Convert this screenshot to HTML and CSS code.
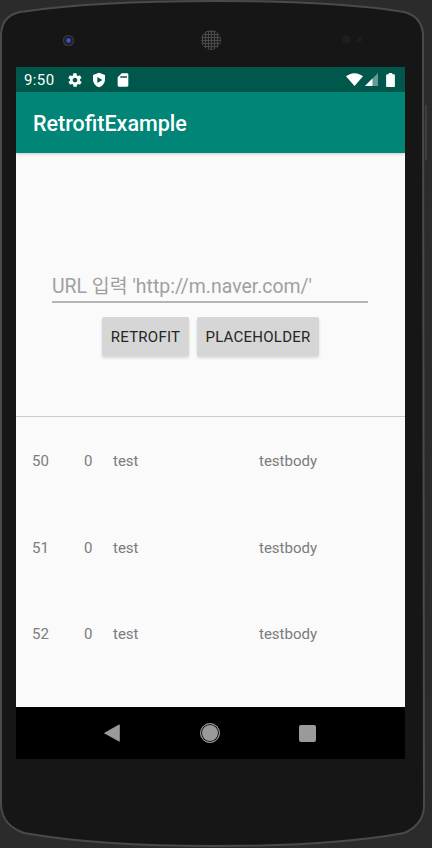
FILE: index.html
```html
<!DOCTYPE html>
<html lang="ko">
<head>
  <meta charset="UTF-8">
  <title>RetrofitExample</title>
  <link rel="stylesheet" href="styles.css">
</head>
<body>
  <div class="phone">
    <svg class="phone-body" viewBox="0 0 432 848">
      <path d="M1 34C2 21 8 15 20 12C80 3 150 1 216 1C282 1 350 3 404 12C416 15 422 22 423 34L424 805C424 820 416 828 404 833C350 843 282 846 216 846C150 846 80 843 24 833C10 828 2 820 1 805Z"/>
    </svg>
    <span class="power-key"></span>
    <div class="top-bezel">
      <span class="camera"></span>
      <span class="speaker"></span>
      <span class="sensors"><i></i><i></i></span>
    </div>

    <div class="screen">
      <div class="status-bar">
        <span class="clock">9:50</span>
        <svg class="ic ic-gear" viewBox="0 0 24 24"><path d="M19.4 13c.1-.3.1-.7.1-1s0-.7-.1-1l2.100-1.600c.2-.2.2-.4.1-.6l-2-3.500c-.1-.2-.4-.3-.6-.2l-2.500 1c-.5-.4-1.100-.7-1.700-1l-.4-2.600c0-.3-.2-.5-.5-.5h-4c-.3 0-.5.2-.5.400l-.4 2.700c-.6.2-1.200.6-1.700 1l-2.500-1c-.2-.1-.5 0-.6.2l-2 3.500c-.1.2-.1.5.1.6L4.600 11c0 .3-.1.700-.1 1s0 .7.1 1l-2.100 1.600c-.2.2-.2.4-.1.600l2 3.500c.1.2.4.3.6.2l2.500-1c.5.4 1.100.7 1.700 1l.4 2.600c0 .3.2.5.5.5h4c.3 0 .5-.2.5-.4l.4-2.700c.6-.2 1.200-.6 1.700-1l2.500 1c.2.1.5 0 .6-.2l2-3.500c.1-.2.1-.5-.1-.6L19.400 13zM12 15.500c-1.900 0-3.500-1.600-3.500-3.500s1.600-3.500 3.500-3.500 3.500 1.600 3.500 3.500-1.600 3.500-3.500 3.500z"/></svg>
        <svg class="ic ic-shield" viewBox="0 0 24 24"><path fill-rule="evenodd" d="M12 1 3 4.500v6.500c0 5.600 3.800 10.700 9 12 5.200-1.300 9-6.400 9-12V4.500L12 1zM9.500 7.500v9l7.500-4.500-7.500-4.500z"/></svg>
        <svg class="ic ic-card" viewBox="0 0 24 24"><path fill-rule="evenodd" d="M10 2 4 8v12c0 1.100.9 2 2 2h12c1.100 0 2-.9 2-2V4c0-1.100-.9-2-2-2h-8zM8 6.500h10v2H8z"/></svg>
        <span class="status-gap"></span>
        <svg class="ic-wifi" viewBox="0 0 24 18"><path d="M12 18 0 4.500C3 1.800 7.300 0 12 0s9 1.800 12 4.500L12 18z"/></svg>
        <svg class="ic-signal" viewBox="0 0 14 14"><path opacity=".4" d="M14 0v14H0z"/><path d="M8 6v8H0z"/></svg>
        <svg class="ic-battery" viewBox="0 0 10 16"><path d="M3 0h4v1.500h2c.6 0 1 .4 1 1V15c0 .6-.4 1-1 1H1c-.6 0-1-.4-1-1V2.500c0-.6.4-1 1-1h2z"/></svg>
      </div>
      <div class="toolbar">RetrofitExample</div>

      <div class="content">
        <div class="form-area">
          <div class="url-input">URL 입력 'http://m.naver.com/'</div>
          <div class="btn-row">
            <button class="btn btn-retrofit" type="button">RETROFIT</button>
            <button class="btn btn-placeholder" type="button">PLACEHOLDER</button>
          </div>
        </div>
        <div class="list">
          <div class="row"><span class="c-id">50</span><span class="c-user">0</span><span class="c-title">test</span><span>testbody</span></div>
          <div class="row"><span class="c-id">51</span><span class="c-user">0</span><span class="c-title">test</span><span>testbody</span></div>
          <div class="row"><span class="c-id">52</span><span class="c-user">0</span><span class="c-title">test</span><span>testbody</span></div>
        </div>
      </div>

      <div class="nav-bar">
        <svg class="nav-back" viewBox="0 0 16 18"><path d="M15 .5c.4-.2.800 0 .8.500v16c0 .5-.4.700-.8.500L.5 9.500c-.3-.2-.3-.600 0-.8L15 .5z"/></svg>
        <span class="nav-home"></span>
        <span class="nav-recent"></span>
      </div>
    </div>
  </div>
</body>
</html>
```
FILE: styles.css
```css
html, body { margin: 0; height: 100%; }
body { background: #2b2b2b; overflow: hidden; font-family: Roboto, "Noto Sans CJK KR", sans-serif; }

.phone { position: relative; height: 848px; padding-top: 67px; box-sizing: border-box; }
.phone-body { position: absolute; left: 0; top: 0; width: 432px; height: 848px; }
.phone-body path { fill: #161616; stroke: #4a4a4a; stroke-width: 2; }
.power-key { position: absolute; left: 425px; top: 105px; width: 2px; height: 55px; background: #3d3d3d; }

.top-bezel { position: absolute; left: 0; top: 0; width: 432px; height: 67px; }
.camera {
  position: absolute; left: 63px; top: 35px;
  width: 11px; height: 11px; border-radius: 50%;
  background: radial-gradient(circle, #4a52c0 0 18%, #15162c 42%, #333 62%, #6a6a6a 85%, #161616 100%);
}
.speaker {
  position: absolute; left: 201px; top: 30px;
  width: 20px; height: 20px; border-radius: 50%;
  background: radial-gradient(circle, #4a4a4a 1px, #1c1c1c 1.2px) 0 0 / 3px 3px;
}
.sensors { position: absolute; left: 342px; top: 35px; display: flex; gap: 6px; align-items: center; }
.sensors i { display: block; width: 9px; height: 9px; border-radius: 50%; background: #1e1e1e; }
.sensors i + i { width: 5px; height: 5px; }

.screen { position: relative; width: 389px; height: 692px; margin-left: 16px; display: flex; flex-direction: column; }

.status-bar {
  height: 25px; flex: none; background: #00574b; color: #fff;
  display: flex; align-items: center; padding: 0 10px 0 8px;
}
.clock { font-size: 15px; width: 43px; letter-spacing: .4px; }
.ic { fill: #fff; width: 16px; height: 16px; margin-right: 8px; flex: none; }
.status-gap { flex: 1; }
.ic-wifi { fill: #fff; width: 17px; height: 13px; margin-right: 2px; }
.ic-signal { fill: #fff; width: 13px; height: 13px; margin-right: 8px; }
.ic-battery { fill: #fff; width: 9px; height: 14px; }

.toolbar {
  height: 61px; flex: none; background: #008577; color: #fff;
  padding-left: 17px; line-height: 63px; font-size: 21.500px; font-weight: 500;
  box-shadow: 0 1px 3px rgba(0, 0, 0, .2); position: relative;
}

.content { flex: 1; background: #fafafa; color: #7c7c7c; }
.form-area {
  height: 264px; box-sizing: border-box; border-bottom: 1px solid #c9cccb;
  padding: 120px 37px 0 36px;
  display: flex; flex-direction: column;
}
.url-input {
  height: 28px; line-height: 28px; font-size: 19.450px; color: #a0a0a0;
  border-bottom: 2px solid #b5b5b5; white-space: nowrap;
}
.btn-row { display: flex; justify-content: center; gap: 8px; margin-top: 14px; padding-left: 1px; }
.btn {
  height: 39px; padding: 0; border: 0; border-radius: 2px;
  background: #d6d6d6; color: #262626;
  font: 400 15px Roboto, sans-serif; letter-spacing: .25px;
  box-shadow: 0 2px 3px rgba(0, 0, 0, .14);
}
.btn-retrofit { width: 87px; }
.btn-placeholder { width: 122px; }

.list { padding-top: 1px; }
.row {
  height: 86.500px; box-sizing: border-box; padding: 33px 0 0 16px;
  display: flex; font-size: 15px; line-height: 20px;
}
.c-id { width: 52px; }
.c-user { width: 29px; }
.c-title { width: 146px; }

.nav-bar { height: 52px; flex: none; background: #000; display: flex; align-items: center; }
.nav-back { fill: #9a9a9a; width: 16px; height: 18px; margin-left: 88px; }
.nav-home {
  box-sizing: border-box; width: 20px; height: 20px; margin-left: 80px;
  border-radius: 50%; background: #9a9a9a; border: 1px solid #9a9a9a;
  box-shadow: inset 0 0 0 1px #000;
}
.nav-recent { width: 17px; height: 17px; margin-left: 79px; border-radius: 2px; background: #9a9a9a; }
```
